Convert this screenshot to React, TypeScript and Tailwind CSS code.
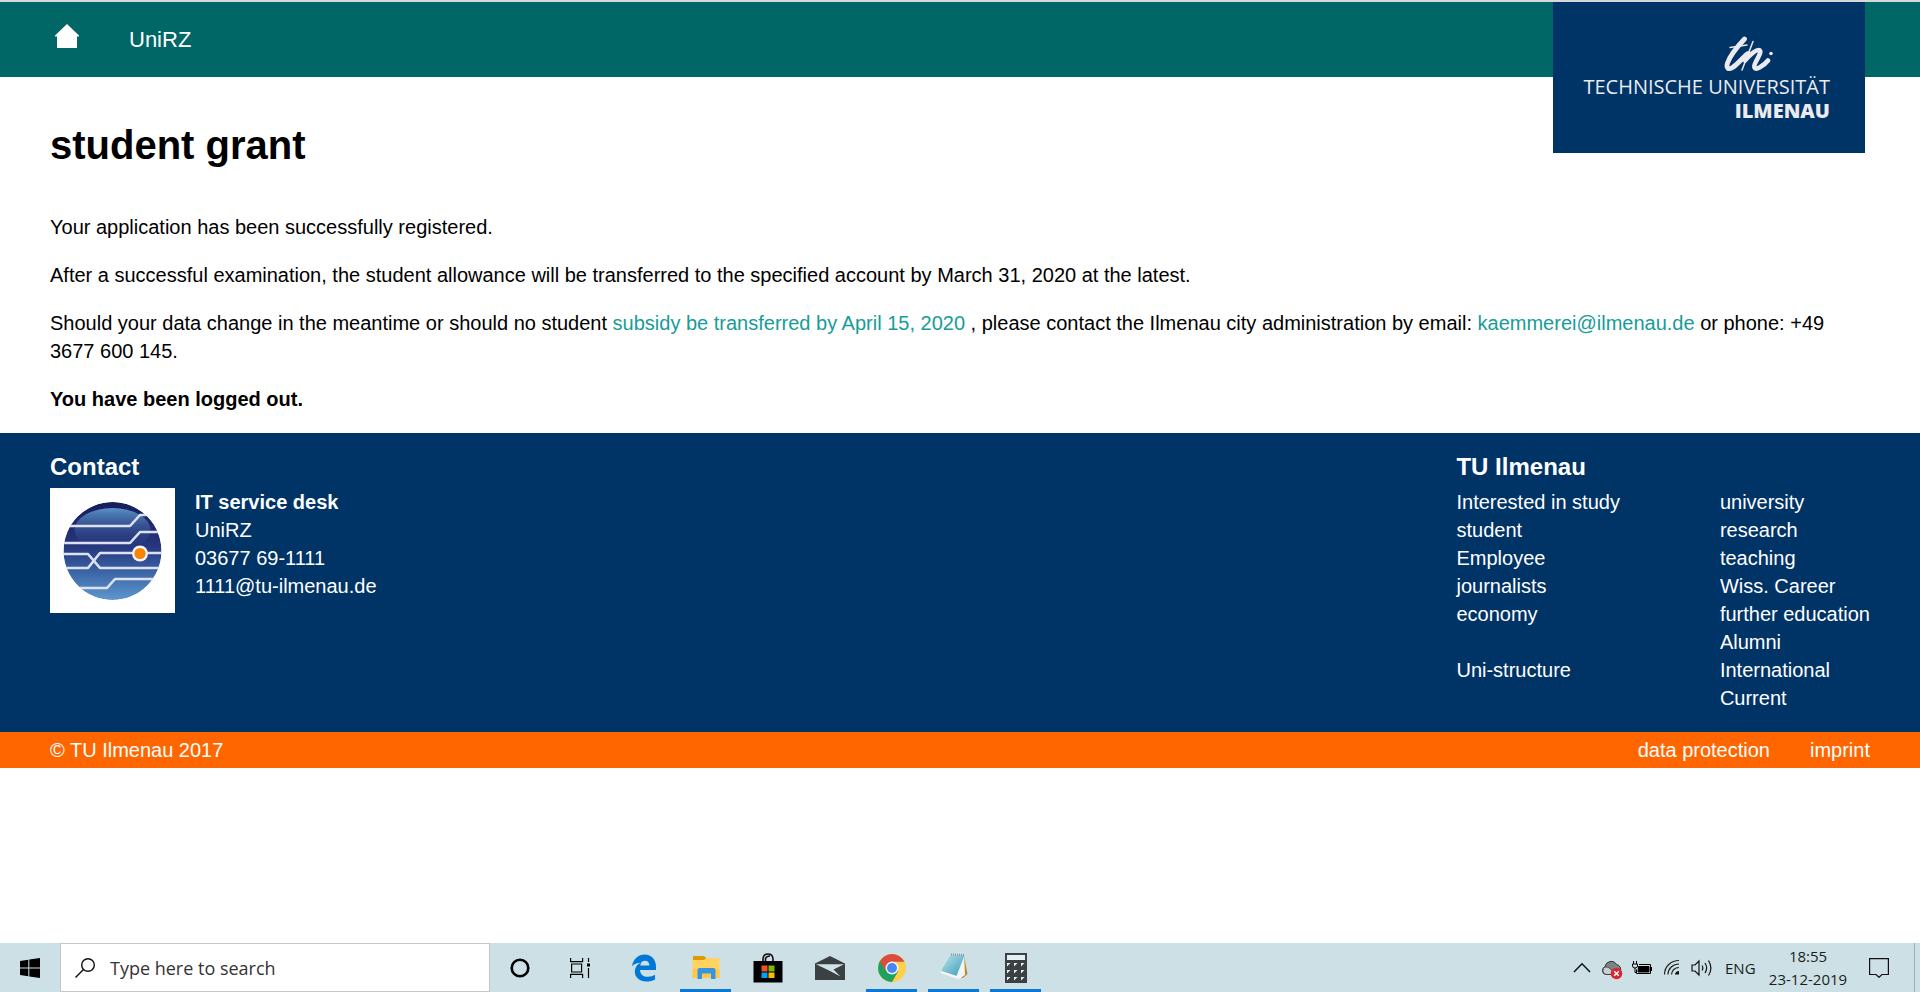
import type { ReactNode } from "react";

const audienceLinks = ["Interested in study", "student", "Employee", "journalists", "economy", "", "Uni-structure"];
const topicLinks = ["university", "research", "teaching", "Wiss. Career", "further education", "Alumni", "International", "Current"];

function HomeIcon() {
  return (
    <svg width="24" height="24" viewBox="0 0 24 24" fill="#fff" aria-hidden="true">
      <path d="M12 0 24 11.6V12.6H22V24H2V12.6H0V11.6Z" />
    </svg>
  );
}

function ScriptMark() {
  return (
    <svg width="50" height="36" viewBox="0 0 50 36" fill="none" stroke="#e9ebef" strokeLinecap="round" strokeLinejoin="round" aria-hidden="true">
      <path d="M20.500 3C13 11 6 20 3.500 27C1.800 32.500 4.500 34 8.500 31.500C14 28 19 21 24 17.500" strokeWidth="4.800" />
      <path d="M6 11.500 23 9" strokeWidth="1.300" />
      <path d="M29 5.500 18 34" strokeWidth="1.500" />
      <path d="M21 24.500C25.500 19.500 30.500 14 34.500 14C38.500 14 35 20 32 25.500C28.500 32 31 34 35.500 31.500C40 29 42.500 26.500 44 24.500" strokeWidth="4.600" />
      <circle cx="47" cy="17.500" r="1.800" fill="#e9ebef" stroke="none" />
    </svg>
  );
}

function UniversityLogo() {
  return (
    <a
      href="#university"
      className="absolute top-0 right-[55px] flex h-[151px] w-[312px] flex-col items-end bg-[#003366] pt-[34px] pr-[35px] font-['Open_Sans',sans-serif] text-[20px] text-[#e9ebef]"
    >
      <span className="mr-14">
        <ScriptMark />
      </span>
      <span className="mt-[3px] leading-6 whitespace-nowrap">TECHNISCHE UNIVERSITÄT</span>
      <span className="leading-6 font-extrabold">ILMENAU</span>
    </a>
  );
}

function ServiceGlobe() {
  return (
    <svg className="shrink-0 bg-white" width="125" height="125" viewBox="0 0 125 125" role="img" aria-label="UniRZ">
      <defs>
        <linearGradient id="globe" x1="0" y1="0" x2="0" y2="1">
          <stop offset="0" stopColor="#171d5c" />
          <stop offset="0.450" stopColor="#26367d" />
          <stop offset="0.700" stopColor="#3a62a3" />
          <stop offset="1" stopColor="#5d98cf" />
        </linearGradient>
        <linearGradient id="gloss" x1="0" y1="0" x2="0" y2="1">
          <stop offset="0" stopColor="#5a93c8" />
          <stop offset="1" stopColor="#26367d" stopOpacity="0" />
        </linearGradient>
        <clipPath id="disc">
          <circle cx="62.500" cy="63" r="49" />
        </clipPath>
      </defs>
      <g clipPath="url(#disc)">
        <circle cx="62.500" cy="63" r="49" fill="url(#globe)" />
        <ellipse cx="62.500" cy="42" rx="38" ry="22" fill="url(#gloss)" />
        <g fill="none" stroke="#dde2f2" strokeWidth="2.600" strokeLinejoin="round">
          <path d="M10 38H80L90 27H112" />
          <path d="M10 55H80L90 44H115" />
          <path d="M10 66H38L50 80H115" />
          <path d="M10 80H38L50 65H115" />
          <path d="M20 100H57L65 91H110" />
        </g>
        <circle cx="90" cy="65.500" r="8" fill="#f4f3f7" />
        <circle cx="90" cy="65.500" r="5.600" fill="#f98400" />
      </g>
    </svg>
  );
}

function LinkColumn({ items }: { items: string[] }) {
  return (
    <ul className="whitespace-nowrap">
      {items.map((item, i) => (
        <li key={i} className="h-7">
          {item && <a href="#topic">{item}</a>}
        </li>
      ))}
    </ul>
  );
}

function TaskButton({ label, active = false, children }: { label: string; active?: boolean; children: ReactNode }) {
  return (
    <button
      type="button"
      aria-label={label}
      className={
        active
          ? "flex h-full w-[51px] items-center justify-center border-y-3 border-t-transparent border-b-[#0a78d6]"
          : "flex h-full w-[51px] items-center justify-center border-y-3 border-transparent"
      }
    >
      {children}
    </button>
  );
}

function TrayButton({ label, children }: { label: string; children: ReactNode }) {
  return (
    <button type="button" aria-label={label} className="flex w-[30px] items-center justify-center">
      {children}
    </button>
  );
}

function TaskButtons() {
  return (
    <div className="ml-1 flex gap-[11px]">
      <TaskButton label="Cortana">
        <svg width="30" height="30" viewBox="0 0 30 30">
          <circle cx="15" cy="15" r="8.300" fill="none" stroke="#000" strokeWidth="2.600" />
        </svg>
      </TaskButton>
      <TaskButton label="Task View">
        <svg width="24" height="20" viewBox="0 0 24 20" fill="none" stroke="#000" strokeWidth="1.200">
          <path d="M.6 0V3.600H12.600V0M.6 20V16.400H12.600V20M1.600 6H11.600V14H1.600ZM18.500 0V4M18.500 10V20" />
          <path d="M17 5.500H20V8.500H17Z" fill="#000" stroke="none" />
        </svg>
      </TaskButton>
      <TaskButton label="Edge">
        <svg width="26" height="28" viewBox="0 0 26 28">
          <path
            d="M1 12.300C2 5 7.500.5 13.700.5C20.500.5 25 5.500 25 12.500V16H9C9.300 21 13 23 17 22.800C19.700 22.700 22.200 22 24 20.800V25.500C21.500 26.900 18.500 27.500 15.600 27.500C8 27.500 3.800 23 3.800 17.500C3.800 13.500 6 10.400 9.500 8.700C6 8.700 3 10 1 12.300ZM9.300 11.500H18.400C18.400 8.500 16.800 6.800 14 6.800C11.300 6.800 9.500 8.700 9.300 11.500Z"
            fill="#0078d7"
            fillRule="evenodd"
          />
        </svg>
      </TaskButton>
      <TaskButton label="File Explorer" active>
        <svg width="28" height="26" viewBox="0 0 28 26">
          <path d="M1 2Q1 1 2 1H12L14 3V6H1Z" fill="#df9900" />
          <path d="M.5 5H12L14.500 3H27.500V23H.5Z" fill="#ffd262" />
          <path d="M.5 14H27.500V23H.5Z" fill="#fcc84e" />
          <path d="M5.500 24V15Q5.500 13 7.500 13H21.500Q23.500 13 23.500 15V24H19V18.500H10V24Z" fill="#3794df" />
        </svg>
      </TaskButton>
      <TaskButton label="Microsoft Store">
        <svg width="30" height="30" viewBox="0 0 30 30">
          <path d="M10 8V5.500Q10.500 1 15 1T20 5.500V8M12.500 8V5.500Q13.500 3 17 3" fill="none" stroke="#111" strokeWidth="1.600" />
          <path d="M.5 8H29.500V29.500H.5Z" fill="#000" />
          <path d="M8.500 12.500H14.500V18.500H8.500Z" fill="#f25022" />
          <path d="M15.500 12.500H21.500V18.500H15.500Z" fill="#7fba00" />
          <path d="M8.500 19.500H14.500V25H8.500Z" fill="#00a4ef" />
          <path d="M15.500 19.500H21.500V25H15.500Z" fill="#ffb900" />
        </svg>
      </TaskButton>
      <TaskButton label="Mail">
        <svg width="30" height="24" viewBox="0 0 30 24">
          <path d="M0 7.500 15 0 30 7.500V24H0Z" fill="#3b4143" />
          <path d="M1 8.300H29L18.500 13.500 25.500 20.500 14 14.500Z" fill="#cee2e7" />
        </svg>
      </TaskButton>
      <TaskButton label="Chrome" active>
        <svg width="28" height="28" viewBox="0 0 28 28">
          <circle cx="14" cy="14" r="14" fill="#ffcf47" />
          <path d="M14 14 1.880 7A14 14 0 0 0 14 28L20.060 17.500Z" fill="#1ea05f" />
          <path d="M14 14 7.940 17.500 1.880 7A14 14 0 0 1 26.120 7L26.800 7.800H14Z" fill="#db4c3f" />
          <circle cx="14" cy="14" r="6.500" fill="#f4f6f8" />
          <circle cx="14" cy="14" r="5" fill="#4587f3" />
        </svg>
      </TaskButton>
      <TaskButton label="Notepad" active>
        <svg className="mb-1" width="28" height="28" viewBox="0 0 28 28">
          <defs>
            <linearGradient id="pad" x1="0" y1="0" x2="1" y2="1">
              <stop offset="0" stopColor="#b9e3ec" />
              <stop offset="1" stopColor="#3a9db8" />
            </linearGradient>
          </defs>
          <path d="M24 4 27.500 22 23 26 20 25Z" fill="#b98a35" />
          <path d="M24 3 25 23 18 27.500 15 24Z" fill="#f3f5f4" />
          <path d="M10.500 3 24.500 3.500 16.500 24 1 19Z" fill="url(#pad)" />
          <path d="M1 19 16.500 24 18 27 .5 21Z" fill="#f6f8f8" />
          <path d="M11 2.500 25 3" stroke="#8b9699" strokeWidth="2" strokeDasharray="1 1" />
        </svg>
      </TaskButton>
      <TaskButton label="Calculator" active>
        <svg width="22" height="30" viewBox="0 0 22 30">
          <path d="M0 0H22V30H0Z" fill="#3b4143" />
          <path
            d="M2 2H20V7H2ZM2 10H5.500L2 13.500ZM9 10H12.500L9 13.500ZM16 10H19.500L16 13.500ZM2 17H5.500L2 20.500ZM9 17H12.500L9 20.500ZM16 17H19.500L16 20.500ZM2 24H5.500L2 27.500ZM9 24H12.500L9 27.500ZM16 24H19.500L16 27.500Z"
            fill="#e4f0f3"
          />
        </svg>
      </TaskButton>
    </div>
  );
}

function SystemTray() {
  return (
    <div className="ml-auto flex text-[15px] text-[#1b1f20]">
      <TrayButton label="Show hidden icons">
        <svg width="18" height="12" viewBox="0 0 18 12" fill="none" stroke="#111" strokeWidth="1.500">
          <path d="M1 10 9 1.800 17 10" />
        </svg>
      </TrayButton>
      <TrayButton label="OneDrive">
        <svg className="mt-1" width="22" height="20" viewBox="0 0 22 20">
          <path d="M5 14.500A4 4 0 0 1 4 6.800A6.200 6.200 0 0 1 15.500 4.500A5 5 0 0 1 19 12L14 14.500Z" fill="#7b8385" stroke="#333" />
          <path d="M5 14.500A4 4 0 0 1 4 7C8 6.500 9 9 14 13L13 14.500Z" fill="#c9cfd1" stroke="#444" />
          <circle cx="15.500" cy="13.500" r="5.800" fill="#dc2430" />
          <path d="M13.200 11.200 17.800 15.800M17.800 11.200 13.200 15.800" stroke="#fff" strokeWidth="1.500" />
        </svg>
      </TrayButton>
      <TrayButton label="Battery">
        <svg width="20" height="14" viewBox="0 0 20 14" fill="none" stroke="#000">
          <path d="M1.500 0V3M4.500 0V3M.5 3H5.500V5Q5.500 7 3 7T.5 5ZM3 7V11.500H5" />
          <path d="M7 3.500H18.500V12.500H4.500V8.500" />
          <path d="M6.500 5.500H17V11H6Z" fill="#000" />
          <path d="M19.500 6V10" />
        </svg>
      </TrayButton>
      <TrayButton label="Wi-Fi">
        <svg width="18" height="17" viewBox="0 0 18 17" fill="none" stroke="#222" strokeWidth="1.200">
          <path d="M1.500 15.500C1.500 7.500 8 1.500 16 1.500M5 15.500C5 9.500 10 5 16 5M8.500 15.500C8.500 11.500 12 8.500 16 8.500" />
          <path d="M12 15.500C12 13.500 14 12 16 12V15.500Z" fill="#111" stroke="none" />
        </svg>
      </TrayButton>
      <TrayButton label="Volume">
        <svg width="22" height="18" viewBox="0 0 22 18" fill="none" stroke="#111" strokeWidth="1.200">
          <path d="M1 6H4L8 2V16L4 12H1Z" />
          <path d="M11 6.500Q12.700 9 11 11.500M14 4Q17.300 9 14 14M17.500 1.500Q22.300 9 17.500 16.500" />
        </svg>
      </TrayButton>
      <button type="button" className="w-[50px] pl-2 text-left">
        ENG
      </button>
      <button type="button" className="flex w-[82px] flex-col items-center justify-center leading-[23px] whitespace-nowrap">
        <span>18:55</span>
        <span>23-12-2019</span>
      </button>
      <button type="button" aria-label="Notifications" className="mr-[5px] flex w-[60px] items-center justify-center">
        <svg width="20" height="20" viewBox="0 0 20 20" fill="none" stroke="#111" strokeWidth="1.200">
          <path d="M.6 .6H19.400V16.500H13L10 19.300 7 16.500H.6Z" />
        </svg>
      </button>
      <button type="button" aria-label="Show desktop" className="w-1.5 border-l border-[#9fb0b5]" />
    </div>
  );
}

function Taskbar() {
  return (
    <div className="mt-auto flex h-[49px] bg-[#cce0e5] font-['Open_Sans',sans-serif]">
      <button type="button" aria-label="Start" className="flex w-[60px] items-center justify-center">
        <svg width="20" height="20" viewBox="0 0 20 20">
          <path d="M0 3 8.300 1.700V9.400H0ZM9.300 1.500 20 0V9.400H9.300ZM0 10.500H8.300V18.200L0 17ZM9.300 10.500H20V20L9.300 18.400Z" />
        </svg>
      </button>
      <label className="flex w-[430px] items-center gap-[15px] border border-[#c6c6c6] bg-white pl-3.5">
        <svg className="shrink-0" width="20" height="20" viewBox="0 0 20 20" fill="none" stroke="#111" strokeWidth="1.400">
          <circle cx="13" cy="7" r="6.300" />
          <path d="M8.500 11.500 .5 19.500" />
        </svg>
        <input
          type="text"
          aria-label="Search"
          placeholder="Type here to search"
          className="w-full text-[18px] outline-none placeholder:text-[#333333]"
        />
      </label>
      <TaskButtons />
      <SystemTray />
    </div>
  );
}

export default function App() {
  return (
    <div className="flex min-h-screen flex-col bg-white font-['Liberation_Sans',Arial,sans-serif] text-[20px] leading-7 text-black">
      <header className="relative flex h-[77px] items-center border-t-2 border-[#d5d9dc] bg-[#006666] pl-[55px]">
        <nav className="flex items-center gap-[50px] text-[22px] text-white">
          <a href="#home" aria-label="Home" className="pb-2">
            <HomeIcon />
          </a>
          <a href="#unirz">UniRZ</a>
        </nav>
        <UniversityLogo />
      </header>

      <main className="px-[50px] pt-11 pb-5">
        <h1 className="mb-11 text-[40px] leading-12 font-bold">student grant</h1>
        <div className="flex flex-col gap-5">
          <p>Your application has been successfully registered.</p>
          <p>After a successful examination, the student allowance will be transferred to the specified account by March 31, 2020 at the latest.</p>
          <p>
            Should your data change in the meantime or should no student{" "}
            <a href="#subsidy" className="text-[#179c98]">
              subsidy be transferred by April 15, 2020
            </a>{" "}
            , please contact the Ilmenau city administration by email:{" "}
            <a href="mailto:kaemmerei@ilmenau.de" className="text-[#179c98]">
              kaemmerei@ilmenau.de
            </a>{" "}
            or phone: +49 3677 600 145.
          </p>
          <p className="font-bold">You have been logged out.</p>
        </div>
      </main>

      <footer className="text-white">
        <div className="flex justify-between bg-[#003366] px-[50px] py-5">
          <section>
            <h2 className="mb-[7px] text-2xl leading-7 font-bold">Contact</h2>
            <div className="flex gap-5">
              <ServiceGlobe />
              <address className="not-italic">
                <strong>IT service desk</strong>
                <p>UniRZ</p>
                <p>03677 69-1111</p>
                <a href="mailto:1111@tu-ilmenau.de">1111@tu-ilmenau.de</a>
              </address>
            </div>
          </section>
          <section>
            <h2 className="mb-[7px] text-2xl leading-7 font-bold">TU Ilmenau</h2>
            <div className="flex gap-[100px]">
              <LinkColumn items={audienceLinks} />
              <LinkColumn items={topicLinks} />
            </div>
          </section>
        </div>
        <div className="flex justify-between bg-[#ff6600] px-[50px] py-1">
          <p>© TU Ilmenau 2017</p>
          <nav className="flex gap-10">
            <a href="#privacy">data protection</a>
            <a href="#imprint">imprint</a>
          </nav>
        </div>
      </footer>

      <Taskbar />
    </div>
  );
}
